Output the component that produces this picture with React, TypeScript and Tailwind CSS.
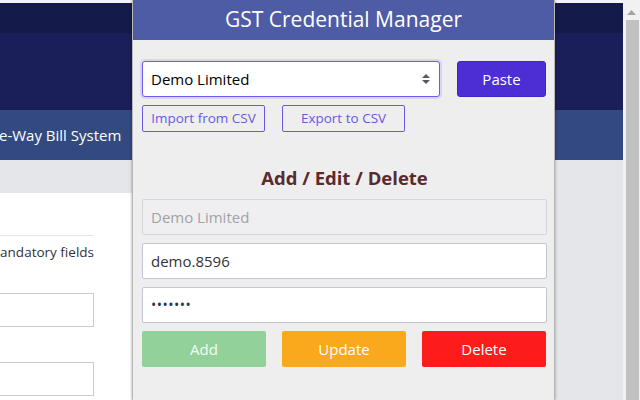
import React from 'react';

const font = { fontFamily: '"Open Sans", "Noto Sans", sans-serif' };

function UpDownIcon() {
  return (
    <svg width="10" height="12" viewBox="0 0 10 12" className="text-[#555a66]">
      <path d="M5 1 L9 5 H1 Z" fill="currentColor" />
      <path d="M5 11 L9 7 H1 Z" fill="currentColor" />
    </svg>
  );
}

function BackgroundPage() {
  return (
    <div className="flex h-full flex-1 flex-col overflow-hidden">
      <div className="h-[3px] bg-[#f4f4f4]" />
      <div className="h-[30px] bg-[#141a4a]" />
      <div className="h-[77px] bg-[#1a1f5a]" />
      <div className="flex h-[50px] items-center bg-[#324a80] text-[15px] text-white">
        <span className="-ml-[1px] whitespace-nowrap">e-Way Bill System</span>
      </div>
      <div className="flex-1 bg-[#e4e6ea] pt-[33px]">
        <div className="h-full w-[540px] bg-white">
          <div className="w-[94px] pt-[42px]">
            <div className="h-px bg-[#e6e6e6]" />
            <div className="mt-[6px] flex justify-end whitespace-nowrap text-[13.5px] text-[#333]">
              andatory fields
            </div>
            <div className="mt-[31px] h-[34px] border border-[#cccccc] border-l-0 bg-white" />
            <div className="mt-[35px] h-[34px] border border-[#cccccc] border-l-0 bg-white" />
          </div>
        </div>
      </div>
    </div>
  );
}

function Scrollbar() {
  return (
    <div className="flex h-full w-[17px] flex-col items-center bg-[#f1f1f1]">
      <div className="flex h-[20px] items-center justify-center pt-[5px]">
        <svg width="9" height="5" viewBox="0 0 9 5">
          <path d="M4.5 0 L9 5 H0 Z" fill="#a3a3a3" />
        </svg>
      </div>
      <div className="ml-[1px] w-[13px] flex-1 bg-[#c1c1c1]" />
    </div>
  );
}

function Popup() {
  return (
    <div className="absolute left-[132px] top-0 flex h-[400px] w-[423px] flex-col border-x border-[#b8b8b8] bg-[#eeeeee] shadow-[0_0_3px_rgba(0,0,0,0.35)]">
      <div className="flex h-[40px] items-center justify-center bg-[#4e5ca6] text-[21px] text-white">
        GST Credential Manager
      </div>
      <div className="flex flex-col pl-[9px] pr-[7px] pt-[21px]">
        <div className="flex gap-[17px]">
          <div className="flex h-[36px] w-[298px] items-center justify-between rounded-[3px] border border-[#6d5ce6] bg-white pl-[8px] pr-[8px] text-[15px] text-black shadow-[0_0_0_2px_#d9d3f5]">
            <span>Demo Limited</span>
            <UpDownIcon />
          </div>
          <button className="flex h-[36px] w-[89px] items-center justify-center rounded-[3px] border border-[#4422c8] bg-[#4c2ed4] text-[15px] text-white">
            Paste
          </button>
        </div>
        <div className="mt-[8px] flex gap-[17px]">
          <button className="flex h-[27px] w-[123px] items-center justify-center rounded-[2px] border border-[#6a58e0] text-[13.5px] text-[#6a58e0]">
            Import from CSV
          </button>
          <button className="flex h-[27px] w-[123px] items-center justify-center rounded-[2px] border border-[#6a58e0] text-[13.5px] text-[#6a58e0]">
            Export to CSV
          </button>
        </div>
        <div className="mt-[32px] text-center text-[18.5px] font-bold text-[#5a2a2c]">
          Add / Edit / Delete
        </div>
        <div className="mt-[7px] flex flex-col gap-[8px]">
          <div className="flex h-[36px] items-center rounded-[2px] border border-[#d6d6dc] bg-[#efeff1] pl-[8px] text-[15px] text-[#a2a2a6]">
            Demo Limited
          </div>
          <div className="flex h-[36px] items-center rounded-[2px] border border-[#c2c6d2] bg-white pl-[8px] text-[15px] text-[#333]">
            demo.8596
          </div>
          <div className="flex h-[36px] items-center rounded-[2px] border border-[#c2c6d2] bg-white pl-[8px] text-[14px] tracking-[0.5px] text-[#2a3450]">
            •••••••
          </div>
        </div>
        <div className="mt-[8px] flex gap-[16px]">
          <button className="flex h-[36px] w-[124px] items-center justify-center rounded-[2px] bg-[#93d19b] text-[15px] text-[#f2fbf3]">
            Add
          </button>
          <button className="flex h-[36px] w-[124px] items-center justify-center rounded-[2px] bg-[#fba91c] text-[15px] text-white">
            Update
          </button>
          <button className="flex h-[36px] w-[124px] items-center justify-center rounded-[2px] bg-[#fd1b1b] text-[15px] text-white">
            Delete
          </button>
        </div>
      </div>
    </div>
  );
}

export default function App() {
  return (
    <div className="relative flex h-[400px] w-[640px] overflow-hidden bg-white" style={font}>
      <BackgroundPage />
      <Scrollbar />
      <Popup />
    </div>
  );
}
